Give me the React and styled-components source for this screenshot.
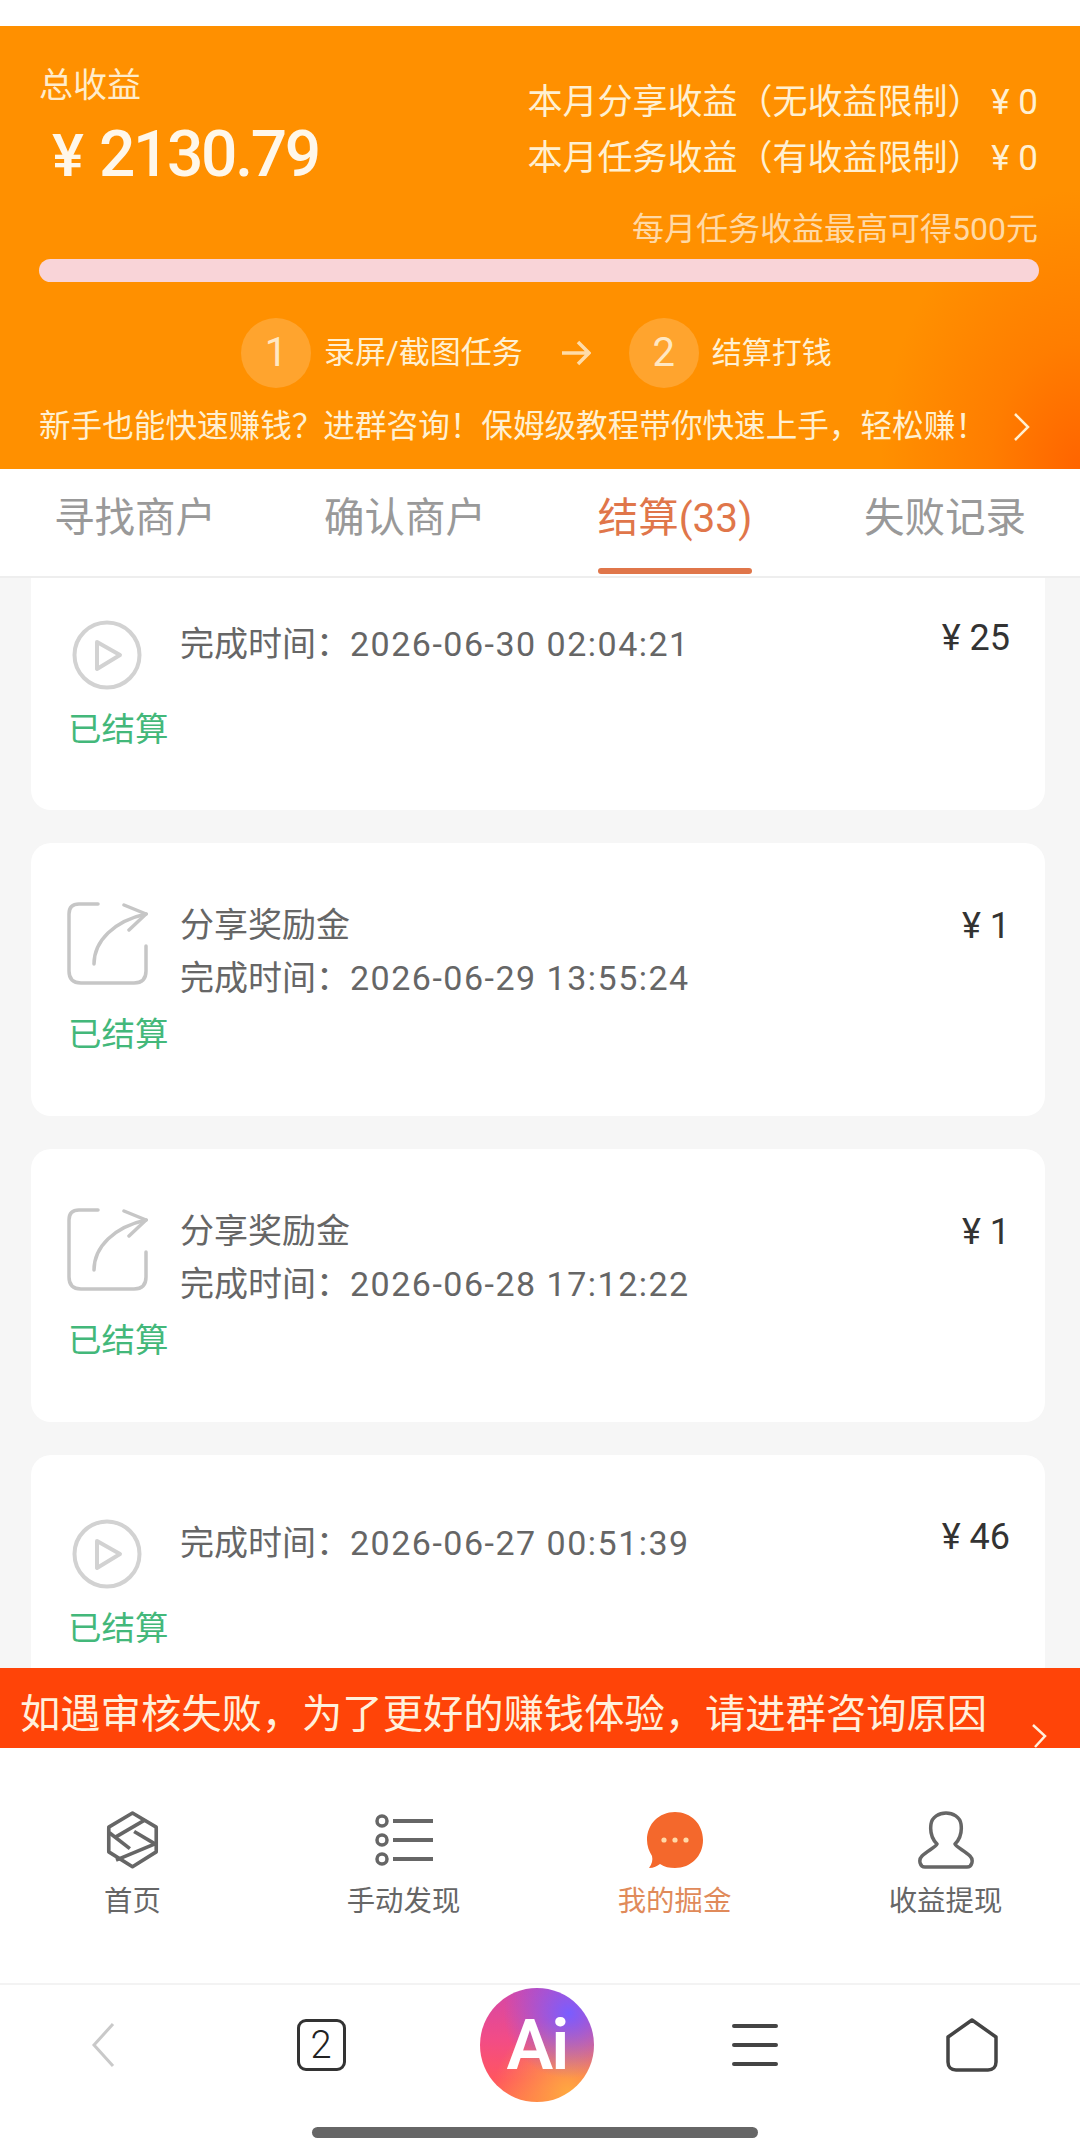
import React from 'react';
import styled, {createGlobalStyle} from 'styled-components';

const FONT = `Roboto, "Noto Sans CJK SC", sans-serif`;

const Global = createGlobalStyle`
    html, body {
        margin: 0;
        padding: 0;
        background: #fff;
    }
    * {
        box-sizing: border-box;
    }
`;

const Page = styled.div`
    width: 1080px;
    height: 2156px;
    display: flex;
    flex-direction: column;
    overflow: hidden;
    background: #fff;
    padding-top: 26px;
    font-family: ${FONT};
`;

const Hero = styled.section`
    height: 443px;
    flex: none;
    padding: 0 42px 0 39px;
    background:
        radial-gradient(ellipse 200px 280px at 100% 100%, #ff6400 0%, rgba(255, 110, 0, 0.55) 45%, rgba(255, 140, 0, 0) 100%),
        #ff9000;
`;

const HeroTop = styled.div`
    display: flex;
    justify-content: space-between;
    height: 161px;
`;

const TotalCol = styled.div`
    padding-top: 39px;
`;

const TotalLabel = styled.div`
    font-size: 34px;
    line-height: 40px;
    color: #ffeccb;
`;

const TotalAmount = styled.div`
    margin-top: 15px;
    padding-left: 13px;
    display: flex;
    align-items: baseline;
    gap: 15px;
    line-height: 70px;
    font-weight: 500;
    color: #fff7ea;
    font-size: 64px;
    letter-spacing: -2.3px;

    & span {
        font-size: 60px;
        letter-spacing: 0;
    }
`;

const EarnCol = styled.div`
    padding-top: 49px;
`;

const EarnRow = styled.div`
    font-size: 35px;
    line-height: 56px;
    color: #fff0d2;
    text-align: right;
    white-space: nowrap;
`;

const LimitNote = styled.div`
    margin-top: 22px;
    font-size: 32px;
    line-height: 40px;
    color: #ffd9a6;
    text-align: right;
    white-space: nowrap;
`;

const ProgressBar = styled.div`
    margin-top: 10px;
    height: 23px;
    width: 1000px;
    border-radius: 12px;
    background: #f9d4d8;
`;

const Steps = styled.div`
    margin-top: 36px;
    padding-left: 202px;
    display: flex;
    align-items: center;
`;

const StepDot = styled.div`
    width: 70px;
    height: 70px;
    flex: none;
    border-radius: 50%;
    background: #ffa42e;
    color: #ffe8c4;
    font-size: 40px;
    line-height: 70px;
    text-align: center;
`;

const StepText = styled.div`
    margin-left: 13px;
    font-size: ${(props) => props.$size}px;
    line-height: 40px;
    color: #fff0d2;
    white-space: nowrap;
`;

const StepArrow = styled.svg`
    margin: 0 38px 0 38px;
    flex: none;
`;

const Promo = styled.div`
    margin-top: 19px;
    display: flex;
    align-items: center;
    justify-content: space-between;
    font-size: 31.6px;
    line-height: 40px;
    color: #fff0d2;
    white-space: nowrap;
`;

const PromoArrow = styled.svg`
    margin-right: 7px;
    flex: none;
`;

const TabBar = styled.nav`
    height: 109px;
    flex: none;
    display: flex;
    background: #fff;
    border-bottom: 2px solid #eeeeee;
`;

const Tab = styled.div`
    position: relative;
    flex: 1;
    display: flex;
    align-items: center;
    justify-content: center;
    padding-bottom: 16px;
    font-size: 40.5px;
    color: ${(props) => (props.$active ? '#e0764a' : '#999999')};

    & span {
        position: relative;
    }
    ${(props) => props.$active && `
        & span::after {
            content: '';
            position: absolute;
            left: 0;
            right: 0;
            bottom: -30px;
            height: 6px;
            border-radius: 3px;
            background: #e0764a;
        }
    `}
`;

const ListViewport = styled.div`
    height: 1090px;
    flex: none;
    overflow: hidden;
    background: #f6f6f6;
`;

/* the list is scrolled a little under the tabs */
const CardList = styled.div`
    margin-top: -22px;
    padding: 0 35px 0 31px;
    display: flex;
    flex-direction: column;
    gap: 33px;
`;

const Card = styled.article`
    height: ${(props) => (props.$share ? 273 : 254)}px;
    flex: none;
    padding: ${(props) => (props.$share ? 56 : 62)}px 35px 0 34px;
    background: #fff;
    border-radius: 20px;
`;

const CardRow = styled.div`
    display: flex;
    align-items: flex-start;
`;

const IconSlot = styled.div`
    width: 84px;
    flex: none;
    margin-right: 31px;
    margin-top: ${(props) => (props.$share ? 3 : 2)}px;
    display: flex;
    justify-content: center;
`;

const CardText = styled.div`
    flex: 1;
    font-size: 34px;
    line-height: 53px;
    color: #666666;
`;

const TimeValue = styled.span`
    letter-spacing: 1.5px;
`;

const CardAmount = styled.div`
    font-size: 36px;
    line-height: 53px;
    color: #333333;
    margin-top: ${(props) => (props.$share ? 1 : -6)}px;
`;

const Status = styled.div`
    margin-top: ${(props) => (props.$share ? 10 : 20)}px;
    padding-left: 3px;
    font-size: 33.5px;
    line-height: 40px;
    color: #43b87a;
`;

const Notice = styled.div`
    position: relative;
    height: 80px;
    flex: none;
    padding: 27px 0 0 20px;
    background: #ff4408;
    color: #fff0dc;
    font-size: 40.3px;
    line-height: 40px;
    white-space: nowrap;
`;

const NoticeArrow = styled.svg`
    position: absolute;
    right: 32px;
    bottom: 0;
`;

const MainNav = styled.nav`
    height: 237px;
    flex: none;
    display: grid;
    grid-template-columns: repeat(4, 271px);
    margin-left: -3px;
    padding-top: 61px;
    background: #fff;
    border-bottom: 2px solid #f3f3f3;
`;

const NavItem = styled.div`
    display: flex;
    flex-direction: column;
    align-items: center;
    gap: 11px;
    font-size: 28.4px;
    line-height: 40px;
    color: ${(props) => (props.$active ? '#e08a5a' : '#666666')};
`;

const NavIcon = styled.div`
    height: 62px;
    display: flex;
    align-items: center;
    justify-content: center;
`;

const BrowserBar = styled.div`
    height: 120px;
    flex: none;
    display: grid;
    grid-template-columns: 206px 230px 202px 234px 200px;
    align-items: center;
    justify-items: center;
    background: #fff;
`;

const AiButton = styled.div`
    width: 114px;
    height: 114px;
    border-radius: 50%;
    background:
        radial-gradient(circle at 78% 22%, #7a5dff 0%, rgba(122, 93, 255, 0) 52%),
        radial-gradient(circle at 78% 92%, #ffa940 0%, rgba(255, 169, 64, 0) 55%),
        linear-gradient(to bottom, #d447a8 0%, #f24c86 45%, #ff5560 80%, #ff6a50 100%);
    color: #fff;
    font-size: 70px;
    font-weight: 600;
    letter-spacing: -2px;
    line-height: 114px;
    text-align: center;
`;

const TabCount = styled.div`
    width: 49px;
    height: 52px;
    border: 3px solid #333333;
    border-radius: 9px;
    font-size: 38px;
    font-weight: 300;
    line-height: 46px;
    text-align: center;
    color: #222222;
`;

const HomeIndicator = styled.div`
    width: 446px;
    height: 11px;
    margin: 22px 0 0 312px;
    border-radius: 6px;
    background: #666666;
`;

const PlayIcon = () => (
    <svg width="70" height="70" viewBox="0 0 70 70" fill="none" stroke="#d2d2d2" strokeWidth="4">
        <circle cx="35" cy="35" r="32.5" />
        <path d="M25 22L48 35L25 49Z" strokeLinejoin="round" />
    </svg>
);

const ShareIcon = () => (
    <svg width="81" height="84" viewBox="16 11 81 84" fill="none" stroke="#c6c6c6" strokeWidth="3.5" strokeLinecap="round">
        <path d="M47 13H28Q18 13 18 23V80Q18 92 30 92H83Q95 92 95 80V55" />
        <path d="M43 73C43 50 63 30 95 23" />
        <path d="M73 14L95 23L78 39" />
    </svg>
);

const HomeIcon = () => (
    <svg width="53" height="58" viewBox="20 16 160 176" fill="none" stroke="#666" strokeWidth="11" strokeLinejoin="round">
        <path d="M100 22L172 65V140L100 185L28 140V65Z" />
        <path d="M138 43L47 96" />
        <path d="M30 82L92 130" />
        <path d="M105 78L172 118" />
        <path d="M170 115L50 165" />
    </svg>
);

const ListIcon = () => (
    <svg width="62" height="56" viewBox="0 0 62 56" fill="none" stroke="#666">
        <circle cx="9" cy="9" r="5" strokeWidth="3.5" />
        <circle cx="9" cy="28" r="5" strokeWidth="3.5" />
        <circle cx="9" cy="47" r="5" strokeWidth="3.5" />
        <path d="M20 9H60M20 28H60M20 47H60" strokeWidth="4" />
    </svg>
);

const ChatIcon = () => (
    <svg width="60" height="60" viewBox="0 0 60 60">
        <path d="M30 2C46 2 58 14 58 30C58 46 46 58 30 58C24 58 20 57 15 54C12 56 9 58 4 58C7 54 8 50 7 46C4 41 2 36 2 30C2 14 14 2 30 2Z" fill="#f4682c" />
        <circle cx="19" cy="30" r="2.6" fill="#ffd9a8" />
        <circle cx="30" cy="30" r="2.6" fill="#ffd9a8" />
        <circle cx="41" cy="30" r="2.6" fill="#ffd9a8" />
    </svg>
);

const UserIcon = () => (
    <svg width="56" height="58" viewBox="0 0 56 58" fill="none" stroke="#666" strokeWidth="3.5" strokeLinejoin="round">
        <path d="M19 33C14 28 12 20 13 13C14 6 21 2 28 2C35 2 42 6 43 13C44 20 42 28 37 33C38 36 47 40 52 45C56 49 54 56 49 56H7C2 56 0 49 4 45C9 40 18 36 19 33Z" />
    </svg>
);

const records = [
    {kind: 'play', time: '2026-06-30 02:04:21', amount: 25},
    {kind: 'share', time: '2026-06-29 13:55:24', amount: 1},
    {kind: 'share', time: '2026-06-28 17:12:22', amount: 1},
    {kind: 'play', time: '2026-06-27 00:51:39', amount: 46},
];

const tabs = ['寻找商户', '确认商户', '结算(33)', '失败记录'];

const navItems = [
    {label: '首页', icon: <HomeIcon />},
    {label: '手动发现', icon: <ListIcon />},
    {label: '我的掘金', icon: <ChatIcon />, active: true},
    {label: '收益提现', icon: <UserIcon />},
];

const App = () => (
    <Page>
        <Global />
        <Hero>
            <HeroTop>
                <TotalCol>
                    <TotalLabel>总收益</TotalLabel>
                    <TotalAmount><span>¥</span>2130.79</TotalAmount>
                </TotalCol>
                <EarnCol>
                    <EarnRow>本月分享收益（无收益限制） ¥ 0</EarnRow>
                    <EarnRow>本月任务收益（有收益限制） ¥ 0</EarnRow>
                </EarnCol>
            </HeroTop>
            <LimitNote>每月任务收益最高可得500元</LimitNote>
            <ProgressBar />
            <Steps>
                <StepDot>1</StepDot>
                <StepText $size={31}>录屏/截图任务</StepText>
                <StepArrow width="30" height="28" viewBox="0 0 30 28" fill="none" stroke="#ffdca8" strokeWidth="3.5">
                    <path d="M1 14H28M17 3L28 14L17 25" />
                </StepArrow>
                <StepDot>2</StepDot>
                <StepText $size={30}>结算打钱</StepText>
            </Steps>
            <Promo>
                新手也能快速赚钱？进群咨询！保姆级教程带你快速上手，轻松赚！
                <PromoArrow width="18" height="30" viewBox="0 0 18 30" fill="none">
                    <path d="M2 2L15 15L2 28" stroke="#fff0d2" strokeWidth="2.5" />
                </PromoArrow>
            </Promo>
        </Hero>
        <TabBar>
            {tabs.map((t, i) => (
                <Tab key={t} $active={i === 2}><span>{t}</span></Tab>
            ))}
        </TabBar>
        <ListViewport>
            <CardList>
                {records.map((r) => {
                    const share = r.kind === 'share';
                    return (
                        <Card key={r.time} $share={share}>
                            <CardRow>
                                <IconSlot $share={share}>
                                    {share ? <ShareIcon /> : <PlayIcon />}
                                </IconSlot>
                                <CardText>
                                    {share && <div>分享奖励金</div>}
                                    <div>完成时间：<TimeValue>{r.time}</TimeValue></div>
                                </CardText>
                                <CardAmount $share={share}>¥ {r.amount}</CardAmount>
                            </CardRow>
                            <Status $share={share}>已结算</Status>
                        </Card>
                    );
                })}
            </CardList>
        </ListViewport>
        <Notice>
            如遇审核失败，为了更好的赚钱体验，请进群咨询原因
            <NoticeArrow width="18" height="24" viewBox="0 0 16 24" fill="none">
                <path d="M2 1L14 12L4 23" stroke="#fff0dc" strokeWidth="2.5" />
            </NoticeArrow>
        </Notice>
        <MainNav>
            {navItems.map((n) => (
                <NavItem key={n.label} $active={n.active}>
                    <NavIcon>{n.icon}</NavIcon>
                    {n.label}
                </NavItem>
            ))}
        </MainNav>
        <BrowserBar>
            <svg width="24" height="46" viewBox="0 0 24 46" fill="none">
                <path d="M22 2L3 23L22 44" stroke="#c9c9c9" strokeWidth="3" />
            </svg>
            <TabCount>2</TabCount>
            <AiButton>Ai</AiButton>
            <svg width="46" height="44" viewBox="0 0 46 44" fill="none" stroke="#444" strokeWidth="4" strokeLinecap="round">
                <path d="M2 3H44M2 22H44M2 41H44" />
            </svg>
            <svg width="52" height="54" viewBox="0 0 52 54" fill="none" stroke="#444" strokeWidth="3.5" strokeLinejoin="round">
                <path d="M26 2L50 19V44C50 49 47 52 42 52H10C5 52 2 49 2 44V19Z" />
            </svg>
        </BrowserBar>
        <HomeIndicator />
    </Page>
);

export default App;
